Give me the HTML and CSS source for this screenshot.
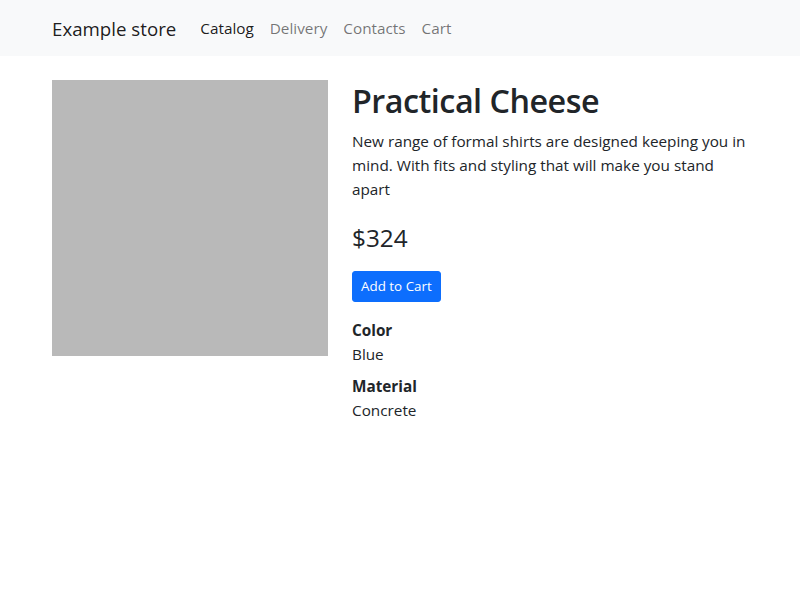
FILE: index.html
```html
<!DOCTYPE html>
<html lang="en">
<head>
<meta charset="utf-8">
<title>Example store</title>
<link rel="stylesheet" href="styles.css">
</head>
<body>
<nav class="navbar">
  <div class="container nav-inner">
    <a class="brand" href="#">Example store</a>
    <ul class="nav">
      <li><a class="nav-link active" href="#">Catalog</a></li>
      <li><a class="nav-link" href="#">Delivery</a></li>
      <li><a class="nav-link" href="#">Contacts</a></li>
      <li><a class="nav-link" href="#">Cart</a></li>
    </ul>
  </div>
</nav>
<main class="container product">
  <div class="product-image"></div>
  <div class="product-info">
    <h1 class="title">Practical Cheese</h1>
    <p class="desc">New range of formal shirts are designed keeping you in mind. With fits and styling that will make you stand apart</p>
    <p class="price">$324</p>
    <button class="btn" type="button">Add to Cart</button>
    <dl class="attrs">
      <dt>Color</dt>
      <dd>Blue</dd>
      <dt>Material</dt>
      <dd>Concrete</dd>
    </dl>
  </div>
</main>
</body>
</html>
```
FILE: styles.css
```css
* { box-sizing: border-box; }
body {
  margin: 0;
  font-family: "Open Sans", "Noto Sans", sans-serif;
  font-size: 15.3px;
  line-height: 24px;
  color: #212529;
  background: #fff;
}
.container {
  width: 696px;
  margin: 0 auto;
}
.navbar {
  background: #f8f9fa;
  padding: 8px 0;
}
.nav-inner {
  display: flex;
  align-items: center;
  height: 40px;
}
.brand {
  font-size: 18.7px;
  line-height: 30px;
  padding-top: 2px;
  color: rgba(0,0,0,.9);
  text-decoration: none;
  margin-right: 16px;
}
.nav {
  display: flex;
  list-style: none;
  margin: 0;
  padding: 0;
}
.nav-link {
  display: block;
  padding: 8px;
  color: rgba(0,0,0,.55);
  text-decoration: none;
}
.nav-link.active { color: rgba(0,0,0,.9); }
.product {
  display: flex;
  gap: 24px;
  padding-top: 24px;
}
.product-image {
  width: 276px;
  height: 276px;
  background: #b9b9b9;
  flex: none;
}
.product-info { flex: 1; }
.title {
  font-size: 32.3px;
  font-weight: 600;
  letter-spacing: -0.5px;
  line-height: 40.8px;
  margin: 0 0 8px;
}
.desc { margin: 0 0 16px; }
.price {
  font-size: 24.3px;
  line-height: 38.4px;
  padding-top: 2px;
  margin: 0 0 14px;
}
.btn {
  display: block;
  font-family: inherit;
  font-size: 13.4px;
  line-height: 21px;
  padding: 4px 8px;
  border: 1px solid #0d6efd;
  background: #0d6efd;
  color: #fff;
  border-radius: 3px;
}
.attrs { margin: 16px 0 0; }
.attrs dt { font-weight: 700; }
.attrs dd { margin: 0 0 8px; }
```
